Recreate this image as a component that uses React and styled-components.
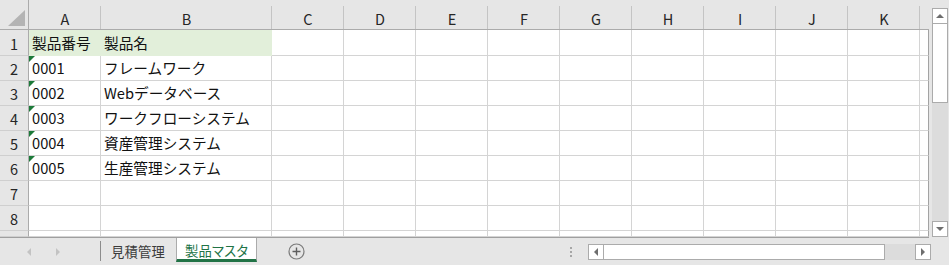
import React from 'react';
import styled, { createGlobalStyle } from 'styled-components';

const GlobalStyle = createGlobalStyle`
  html, body {
    margin: 0;
    padding: 0;
    background: #e6e6e6;
  }
  body {
    font-family: "Noto Sans CJK JP", "Noto Sans", sans-serif;
    color: #000;
  }
`;

const COLS = ['A', 'B', 'C', 'D', 'E', 'F', 'G', 'H', 'I', 'J', 'K'];

const ROWS = [
  { n: '1', a: '製品番号', b: '製品名', fill: true },
  { n: '2', a: '0001', b: 'フレームワーク', mark: true },
  { n: '3', a: '0002', b: 'Webデータベース', mark: true },
  { n: '4', a: '0003', b: 'ワークフローシステム', mark: true },
  { n: '5', a: '0004', b: '資産管理システム', mark: true },
  { n: '6', a: '0005', b: '生産管理システム', mark: true },
  { n: '7' },
  { n: '8' },
  { n: '' },
];

const Window = styled.div`
  width: 949px;
  height: 265px;
  display: flex;
  flex-direction: column;
  background: #e6e6e6;
  overflow: hidden;
`;

const Main = styled.div`
  display: flex;
  height: 238px;
`;

const Sheet = styled.div`
  width: 929px;
  height: 238px;
  box-sizing: border-box;
  border-bottom: 1px solid #9f9f9f;
  display: grid;
  grid-template-columns: 29px 72px 171px repeat(9, 72px) 1fr;
  grid-template-rows: 30px 26px repeat(7, 25px) 1fr;
  overflow: hidden;
  background: #fff;
`;

const Corner = styled.div`
  background: #e6e6e6;
  border-right: 1px solid #ababab;
  border-bottom: 1px solid #ababab;
  box-sizing: border-box;
  svg {
    display: block;
  }
`;

const ColHeader = styled.div`
  box-sizing: border-box;
  border-bottom: 1px solid #ababab;
  background: ${(p) =>
    p.$edge
      ? '#e6e6e6'
      : 'linear-gradient(#c4c4c4, #c4c4c4) no-repeat right 0 top 6px / 1px calc(100% - 6px), #e6e6e6'};
  display: flex;
  align-items: center;
  justify-content: center;
  padding-top: 8px;
  font-size: 14.5px;
  color: #262626;
`;

const RowHeader = styled.div`
  box-sizing: border-box;
  background: #e6e6e6;
  border-right: 1px solid #ababab;
  border-bottom: 1px solid #cfcfcf;
  display: flex;
  align-items: center;
  justify-content: center;
  padding-top: 1px;
  font-size: 14.5px;
  color: #262626;
`;

const Cell = styled.div`
  position: relative;
  box-sizing: border-box;
  background: ${(p) => (p.$fill ? '#e2efda' : '#fff')};
  border-right: 1px solid ${(p) => (p.$fill ? '#e2efda' : '#d4d4d4')};
  border-bottom: 1px solid ${(p) => (p.$fill ? '#e2efda' : '#d4d4d4')};
  display: flex;
  align-items: center;
  padding: 1px 0 0 3px;
  font-size: 14.67px;
  line-height: 1;
  white-space: nowrap;
  color: #111;

  ${(p) =>
    p.$mark &&
    `
    &::before {
      content: '';
      position: absolute;
      left: 0;
      top: 0;
      border-style: solid;
      border-width: 6px 6px 0 0;
      border-color: #1d7a3a transparent transparent transparent;
    }
  `}
`;

const EdgeCell = styled.div`
  box-sizing: border-box;
  background: #fff;
  border-right: 1px solid #a3a3a3;
  border-bottom: 1px solid #d4d4d4;
`;

const VScroll = styled.div`
  width: 16px;
  margin-left: 3px;
  padding-top: 8px;
  padding-bottom: 1px;
  display: flex;
  flex-direction: column;
`;

const ScrollButton = styled.div`
  width: 16px;
  height: 16px;
  box-sizing: border-box;
  background: #fff;
  border: 1px solid #ababab;
  display: flex;
  align-items: center;
  justify-content: center;
  flex-shrink: 0;
  svg {
    display: block;
  }
`;

const VThumb = styled.div`
  height: 80px;
  margin-top: -1px;
  box-sizing: border-box;
  background: #fff;
  border: 1px solid #ababab;
`;

const Track = styled.div`
  flex: 1;
  background: #dcdcdc;
`;

const TabBar = styled.div`
  flex: 1;
  display: flex;
  align-items: flex-start;
`;

const NavArea = styled.div`
  width: 100px;
  height: 27px;
  display: flex;
  align-items: center;
  padding-left: 27px;
  box-sizing: border-box;
  gap: 25px;
  svg {
    display: block;
  }
`;

const Tab = styled.div`
  height: 24px;
  box-sizing: border-box;
  display: flex;
  align-items: center;
  padding: 3px 11px 0;
  font-size: 13.33px;
  font-feature-settings: 'palt';
  letter-spacing: 0.2px;
  white-space: nowrap;
  color: ${(p) => (p.$active ? '#217346' : '#3b3b3b')};
  background: ${(p) =>
    p.$active
      ? '#fff'
      : 'linear-gradient(#8c8c8c, #8c8c8c) no-repeat left 0 top 3px / 1px 20px'};
  ${(p) =>
    p.$active &&
    `
    width: 81px;
    justify-content: center;
    padding: 3px 0 0;
    border-left: 1px solid #ababab;
    border-right: 1px solid #ababab;
    border-bottom: 3px solid #217346;
  `}
  ${(p) => !p.$active && 'width: 76px; padding-left: 11px;'}
`;

const AddButton = styled.div`
  margin-left: 31px;
  height: 27px;
  display: flex;
  align-items: center;
  svg {
    display: block;
  }
`;

const Spacer = styled.div`
  flex: 1;
`;

const Splitter = styled.div`
  width: 2px;
  height: 27px;
  margin-right: 16px;
  display: flex;
  flex-direction: column;
  justify-content: center;
  gap: 2px;
  span {
    width: 2px;
    height: 2px;
    background: #a6a6a6;
  }
`;

const HScroll = styled.div`
  width: 343px;
  height: 16px;
  margin-top: 6px;
  margin-right: 18px;
  display: flex;
`;

const HThumb = styled.div`
  width: 282px;
  margin-left: -1px;
  box-sizing: border-box;
  background: #fff;
  border: 1px solid #ababab;
`;

const Arrow = ({ dir, color = '#6e6e6e', size = 8 }) => {
  const pts = {
    up: '0,4 4,0 8,4',
    down: '0,0 8,0 4,4',
    left: '4,0 4,8 0,4',
    right: '0,0 4,4 0,8',
  }[dir];
  const vertical = dir === 'up' || dir === 'down';
  return (
    <svg width={vertical ? size : 4} height={vertical ? 4 : size} viewBox={vertical ? '0 0 8 4' : '0 0 4 8'}>
      <polygon points={pts} fill={color} />
    </svg>
  );
};

const App = () => (
  <>
    <GlobalStyle />
    <Window>
      <Main>
        <Sheet>
          <Corner>
            <svg width="28" height="29" viewBox="0 0 28 29">
              <polygon points="8,26 25,26 25,10" fill="#b4b4b4" />
            </svg>
          </Corner>
          {COLS.map((c) => (
            <ColHeader key={c}>{c}</ColHeader>
          ))}
          <ColHeader $edge />
          {ROWS.map((r, i) => (
            <React.Fragment key={i}>
              <RowHeader>{r.n}</RowHeader>
              {COLS.map((c) => (
                <Cell
                  key={c}
                  $fill={r.fill && (c === 'A' || c === 'B')}
                  $mark={r.mark && c === 'A'}
                >
                  {c === 'A' ? r.a : c === 'B' ? r.b : null}
                </Cell>
              ))}
              <EdgeCell />
            </React.Fragment>
          ))}
        </Sheet>
        <VScroll>
          <ScrollButton>
            <Arrow dir="up" />
          </ScrollButton>
          <VThumb />
          <Track />
          <ScrollButton>
            <Arrow dir="down" />
          </ScrollButton>
        </VScroll>
      </Main>
      <TabBar>
        <NavArea>
          <Arrow dir="left" color="#c3c3c3" />
          <Arrow dir="right" color="#c3c3c3" />
        </NavArea>
        <Tab>見積管理</Tab>
        <Tab $active>製品マスタ</Tab>
        <AddButton>
          <svg width="17" height="17" viewBox="0 0 17 17">
            <circle cx="8.5" cy="8.5" r="7.5" fill="none" stroke="#7a7a7a" strokeWidth="1.2" />
            <path d="M8.5 4.5v8M4.5 8.5h8" stroke="#5e5e5e" strokeWidth="1.4" />
          </svg>
        </AddButton>
        <Spacer />
        <Splitter>
          <span />
          <span />
          <span />
        </Splitter>
        <HScroll>
          <ScrollButton>
            <Arrow dir="left" />
          </ScrollButton>
          <HThumb />
          <Track />
          <ScrollButton>
            <Arrow dir="right" />
          </ScrollButton>
        </HScroll>
      </TabBar>
    </Window>
  </>
);

export default App;
